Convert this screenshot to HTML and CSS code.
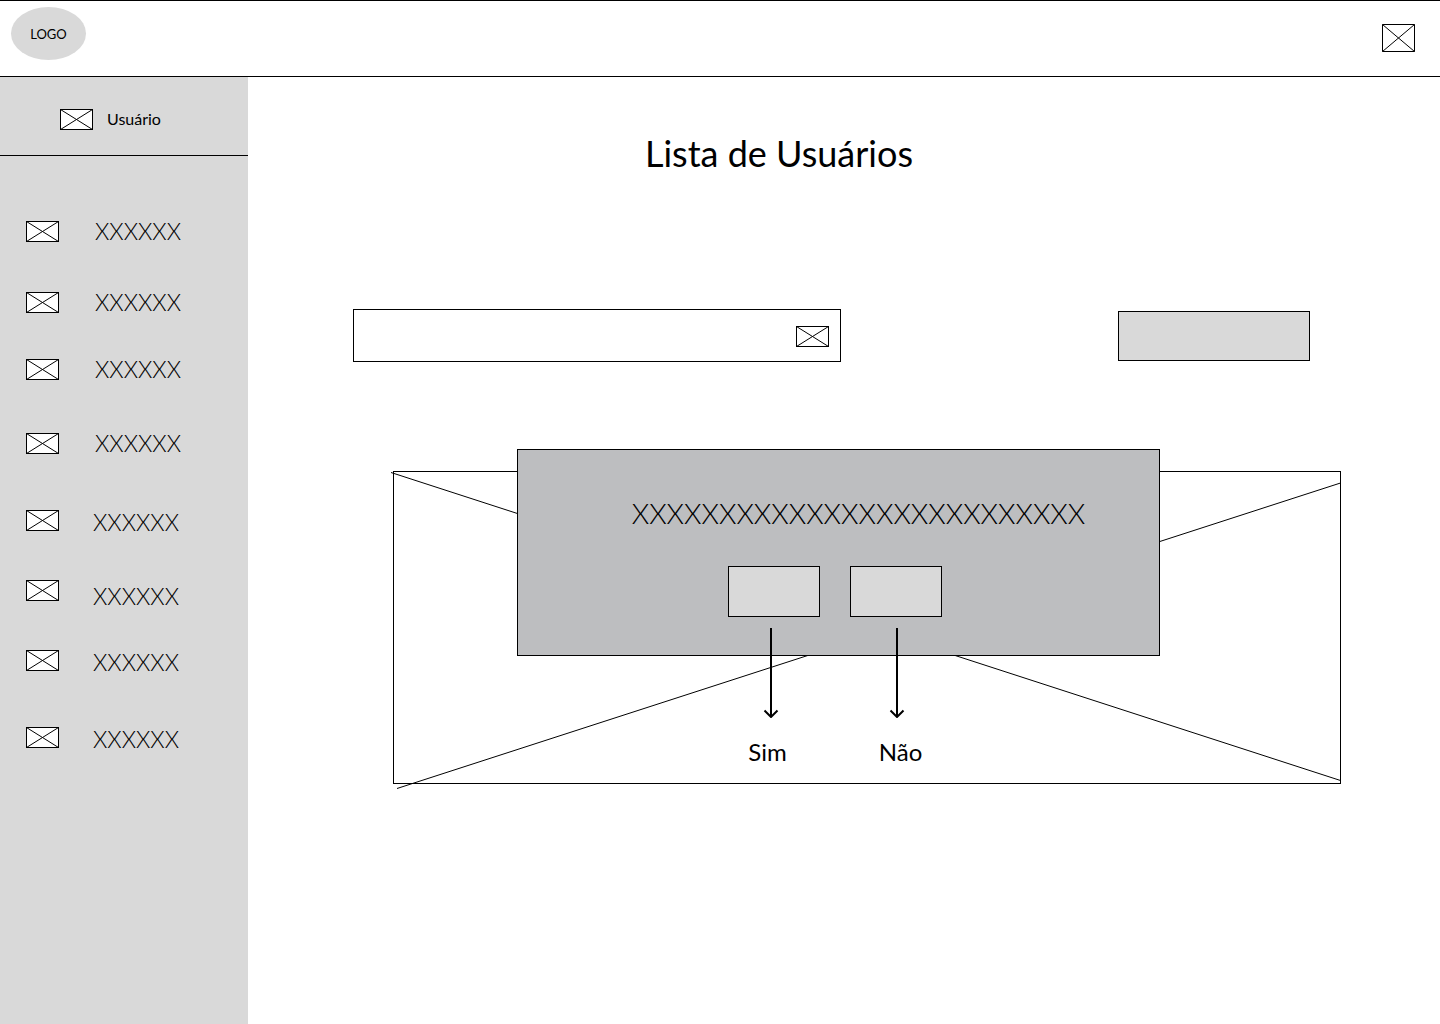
FILE: index.html
```html
<!DOCTYPE html>
<html lang="pt-BR">
<head>
<meta charset="utf-8">
<meta name="viewport" content="width=device-width, initial-scale=1">
<title>Lista de Usuários</title>
<link rel="stylesheet" href="styles.css">
</head>
<body>
<svg class="defs" aria-hidden="true">
  <symbol id="box" viewBox="0 0 33 21"><rect x=".5" y=".5" width="32" height="20" fill="#fff" stroke="#000"/><path d="M.5.5l32 20M32.5.5l-32 20" stroke="#000" fill="none"/></symbol>
  <symbol id="arrow" viewBox="0 0 16 90"><path d="M8 0v89M1.500 82.500L8 89l6.500-6.500" stroke="#000" stroke-width="2" fill="none" stroke-linecap="butt"/></symbol>
</svg>
<header class="topbar">
  <a class="logo" href="#">LOGO</a>
  <button class="icon-button" type="button" aria-label="Menu">
    <svg class="icon-tall" viewBox="0 0 33 28"><path d="M.5.5h32v27H.5zl32 27M32.5.5l-32 27" stroke="#000" fill="none"/></svg>
  </button>
</header>
<div class="layout">
  <aside class="sidebar">
    <div class="user"><svg class="icon"><use href="#box"/></svg><span>Usuário</span></div>
    <nav>
      <ul class="menu">
        <li><svg class="icon"><use href="#box"/></svg><a href="#">XXXXXX</a></li>
        <li><svg class="icon"><use href="#box"/></svg><a href="#">XXXXXX</a></li>
        <li><svg class="icon"><use href="#box"/></svg><a href="#">XXXXXX</a></li>
        <li><svg class="icon"><use href="#box"/></svg><a href="#">XXXXXX</a></li>
        <li class="lower"><svg class="icon"><use href="#box"/></svg><a href="#">XXXXXX</a></li>
        <li class="lower lowest"><svg class="icon"><use href="#box"/></svg><a href="#">XXXXXX</a></li>
        <li class="lower"><svg class="icon"><use href="#box"/></svg><a href="#">XXXXXX</a></li>
        <li class="lower"><svg class="icon"><use href="#box"/></svg><a href="#">XXXXXX</a></li>
      </ul>
    </nav>
  </aside>
  <main class="content">
    <h1>Lista de Usuários</h1>
    <div class="toolbar">
      <form class="search">
        <input type="search" aria-label="Buscar usuário">
        <button class="icon-button" type="button" aria-label="Buscar"><svg class="icon"><use href="#box"/></svg></button>
      </form>
      <button class="action" type="button" aria-label="Novo usuário"></button>
    </div>
    <section class="stage">
      <svg class="panel" viewBox="0 0 946 311" preserveAspectRatio="none" aria-hidden="true">
        <path d="M-3 .5L946.500 308.500M3 316.500L946.500 11"/>
      </svg>
      <div class="dialog" role="dialog" aria-labelledby="question">
        <p id="question">XXXXXXXXXXXXXXXXXXXXXXXXXX</p>
        <div class="choices">
          <button type="button" aria-labelledby="yes"></button>
          <button type="button" aria-labelledby="no"></button>
        </div>
        <div class="notes">
          <div class="arrows"><svg><use href="#arrow"/></svg><svg><use href="#arrow"/></svg></div>
          <div class="labels"><span id="yes">Sim</span><span id="no">Não</span></div>
        </div>
      </div>
    </section>
  </main>
</div>
</body>
</html>
```
FILE: styles.css
```css
* { box-sizing: border-box; }

body {
  margin: 0;
  min-height: 100vh;
  display: flex;
  flex-direction: column;
  background: #fff;
  color: #000;
  font-family: Lato, sans-serif;
}

a { color: inherit; text-decoration: none; }
button { padding: 0; border: 1px solid #000; border-radius: 0; background: #d9d9d9; }
svg { display: block; }

.defs { position: absolute; width: 0; height: 0; }
.icon { width: 33px; height: 21px; flex: none; }
.icon-tall { width: 33px; height: 28px; }
.icon-button { border: 0; background: none; }

.topbar {
  height: 77px;
  padding: 6px 25px 16px 11px;
  border-top: 1px solid #000;
  border-bottom: 1px solid #000;
  display: flex;
  justify-content: space-between;
}
.topbar .icon-button { align-self: center; margin-top: 8px; }
.logo {
  width: 75px;
  height: 53px;
  border-radius: 50%;
  background: #d9d9d9;
  display: grid;
  place-items: center;
  font-size: 13px;
  line-height: 20px;
}

.layout { flex: 1; display: flex; }
.sidebar { width: 248px; flex: none; background: #d9d9d9; }
.user {
  height: 79px;
  padding: 6px 0 0 60px;
  border-bottom: 1px solid #000;
  display: flex;
  align-items: center;
  gap: 14px;
  font-size: 16px;
  line-height: 24px;
}
.menu {
  list-style: none;
  margin: 0;
  padding: 57px 0 0 26px;
  display: grid;
  grid-template-rows: 71px 67px 74px 77px 70px 70px 77px 36px;
}
.menu li {
  display: flex;
  align-items: flex-start;
  gap: 36px;
  padding-top: 8px;
}
.menu a {
  font-size: 23px;
  font-weight: 300;
  line-height: 36px;
  margin-top: -8px;
}
.menu .lower { gap: 34px; }
.menu .lower a { margin-top: -6px; }
.menu .lowest a { margin-top: -2px; }

.content { flex: 1; min-width: 0; }
h1 {
  margin: 0;
  padding: 52px 130px 0 0;
  text-align: center;
  font-size: 36px;
  font-weight: 400;
  line-height: 48px;
}
.toolbar {
  margin: 132px 130px 0 105px;
  display: flex;
  justify-content: space-between;
  align-items: center;
  gap: 24px;
}
.search {
  flex: 0 1 488px;
  height: 53px;
  border: 1px solid #000;
  display: flex;
  align-items: center;
  padding: 1px 11px 0 0;
}
.search input {
  flex: 1;
  min-width: 0;
  height: 100%;
  padding: 0 12px;
  border: 0;
  font: inherit;
  font-size: 16px;
}
.action { width: 192px; height: 50px; }

.stage { position: relative; margin: 109px 99px 240px 145px; }
.panel {
  width: 100%;
  height: 313px;
  border: 1px solid #000;
  overflow: visible;
}
.panel path { stroke: #000; fill: none; vector-effect: non-scaling-stroke; }
.dialog {
  position: absolute;
  top: -22px;
  left: 124px;
  right: 181px;
  height: 207px;
  padding-top: 42px;
  border: 1px solid #000;
  background: #bdbec0;
}
.dialog p {
  margin: 0;
  padding-left: 40px;
  text-align: center;
  font-size: 28px;
  font-weight: 300;
  line-height: 42px;
}
.choices {
  display: flex;
  justify-content: center;
  gap: 30px;
  padding: 32px 8px 0 0;
}
.choices button { width: 92px; height: 51px; }
.notes {
  padding: 11px 9px 0 0;
  display: grid;
  justify-items: center;
}
.arrows { display: grid; grid-template-columns: 126px 126px; justify-items: center; }
.arrows svg { width: 16px; height: 90px; }
.labels {
  display: grid;
  grid-template-columns: 133px 133px;
  justify-items: center;
  padding-top: 16px;
  font-size: 24px;
  line-height: 36px;
}
```
